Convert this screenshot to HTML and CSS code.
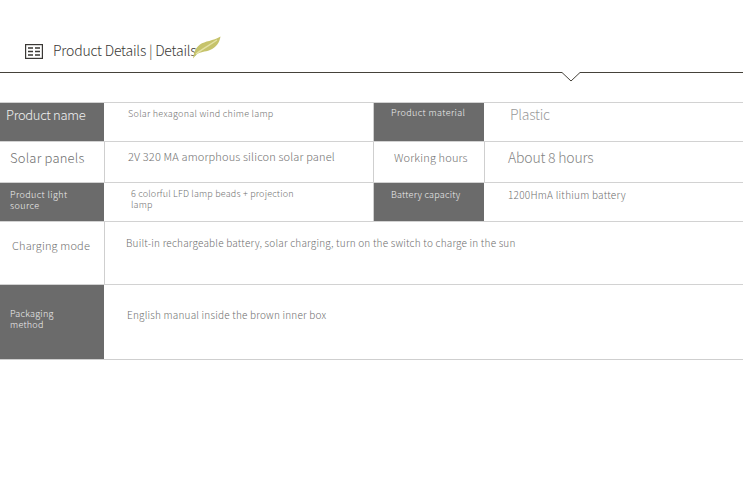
FILE: index.html
```html
<!DOCTYPE html>
<html lang="en">
<head>
<meta charset="utf-8">
<title>Product Details</title>
<link rel="stylesheet" href="styles.css">
</head>
<body>
<header class="title-bar">
  <svg class="list-icon" width="18" height="15" viewBox="0 0 18 15" aria-hidden="true">
    <rect x="0.6" y="0.6" width="16.800" height="13.800" fill="none" stroke="#3a3835" stroke-width="1.2"/>
    <path d="M3 4h5M10 4h5M3 7.500h5M10 7.500h5M3 11h5M10 11h5" stroke="#3a3835" stroke-width="1.6" fill="none"/>
  </svg>
  <h1 class="title">Product Details | Details</h1>
  <svg class="leaf" width="28" height="23" viewBox="0 0 28 23" aria-hidden="true">
    <path d="M0 22.500C1 17 2 12 7 8.500C12 5 20 5 27.500 0.500C26.500 7 23 11.500 17 14C12 16 7 15.500 3 19Z" fill="#c6c36b"/>
    <path d="M3 18C9 13 16 9.500 24 4" stroke="#e4e2a6" stroke-width="1.400" fill="none"/>
  </svg>
</header>
<svg class="rule" width="750" height="11" viewBox="0 0 750 11" aria-hidden="true">
  <path d="M0 0.500H562L571 9L580 0.500H743" fill="none" stroke="#45423a" stroke-width="1"/>
</svg>
<main class="spec">
  <div class="row r1">
    <div class="cell label dark t14 p-a">Product name</div>
    <div class="cell value t9 p-b">Solar hexagonal wind chime lamp</div>
    <div class="cell label dark t9 p-c">Product material</div>
    <div class="cell value light t14 p-d">Plastic</div>
  </div>
  <div class="row r2">
    <div class="cell label t14 p-e">Solar panels</div>
    <div class="cell value t11 p-f">2V 320 MA amorphous silicon solar panel</div>
    <div class="cell label t11 p-g">Working hours</div>
    <div class="cell value t14 p-h">About 8 hours</div>
  </div>
  <div class="row r3">
    <div class="cell label dark t9 p-i">Product light<br>source</div>
    <div class="cell value t9 p-j">6 colorful LFD lamp beads + projection<br>lamp</div>
    <div class="cell label dark t9 p-k">Battery capacity</div>
    <div class="cell value t10 p-l">1200HmA lithium battery</div>
  </div>
  <div class="row r4">
    <div class="cell label t11 p-m">Charging mode</div>
    <div class="cell value wide t10 p-n">Built-in rechargeable battery, solar charging, turn on the switch to charge in the sun</div>
  </div>
  <div class="row r5">
    <div class="cell label dark t9 p-o">Packaging<br>method</div>
    <div class="cell value wide t10 p-p">English manual inside the brown inner box</div>
  </div>
</main>
</body>
</html>
```
FILE: styles.css
```css
* { box-sizing: border-box; }
html, body { margin: 0; padding: 0; background: #fff; }
body {
  width: 750px;
  height: 491px;
  overflow: hidden;
  font-family: "Noto Sans CJK SC", "Noto Sans", sans-serif;
  font-weight: 300;
  color: #707070;
}
.title-bar {
  position: relative;
  display: flex;
  align-items: center;
  gap: 10px;
  height: 72px;
  padding: 28px 0 0 25px;
}
.list-icon { flex: none; margin-top: 3px; }
.title {
  margin: 0;
  font-size: 14px;
  font-weight: 300;
  line-height: 20px;
  color: #3a3835;
  letter-spacing: -0.2px;
}
.leaf { position: absolute; left: 193px; top: 36px; }
.rule { display: block; }
.spec {
  width: 743px;
  margin-top: 19px;
  border-bottom: 1px solid #cfcfcf;
}
.row {
  display: grid;
  grid-template-columns: 105px 269px 111px 258px;
  border-top: 1px solid #d2d2d2;
}
.r1 { height: 39px; }
.r2 { height: 41px; }
.r3 { height: 39px; }
.r4 { height: 63px; }
.r5 { height: 75px; }
.cell { min-width: 0; white-space: nowrap; }
.label { border-right: 1px solid #cfcfcf; }
.value:not(.wide) { border-right: 1px solid #cfcfcf; }
.value:last-child { border-right: 0; }
.wide { grid-column: 2 / 5; }
.dark { background: #6b6b6b; color: #f0f0f0; border-right: 1px solid #fff; }
.light { color: #9a9a9a; }
.t9 { font-size: 9px; line-height: 11px; letter-spacing: 0.25px; }
.t10 { font-size: 10px; line-height: 14px; letter-spacing: 0.2px; }
.t11 { font-size: 11px; line-height: 16px; letter-spacing: 0.15px; }
.t14 { font-size: 13px; line-height: 18px; letter-spacing: 0.2px; }
.p-a { padding: 3px 0 0 6px; letter-spacing: -0.3px; }
.p-b { padding: 5px 0 0 23px; letter-spacing: 0.28px; }
.p-c { padding: 4px 0 0 17px; letter-spacing: 0.4px; }
.p-d { padding: 2px 0 0 25px; font-size: 14px; letter-spacing: -0.25px; }
.p-e { padding: 7px 0 0 10px; }
.p-f { padding: 6px 0 0 23px; }
.p-g { padding: 7px 0 0 20px; }
.p-h { padding: 6px 0 0 23px; font-size: 14px; letter-spacing: -0.2px; color: #858585; }
.p-i { padding: 6px 0 0 10px; letter-spacing: 0.4px; }
.p-j { padding: 5px 0 0 26px; letter-spacing: 0.2px; }
.p-k { padding: 6px 0 0 17px; }
.p-l { padding: 5px 0 0 23px; letter-spacing: 0.25px; }
.p-m { padding: 15px 0 0 12px; }
.p-n { padding: 14px 0 0 21px; }
.p-o { padding: 23px 0 0 10px; }
.p-p { padding: 23px 0 0 22px; }
```
